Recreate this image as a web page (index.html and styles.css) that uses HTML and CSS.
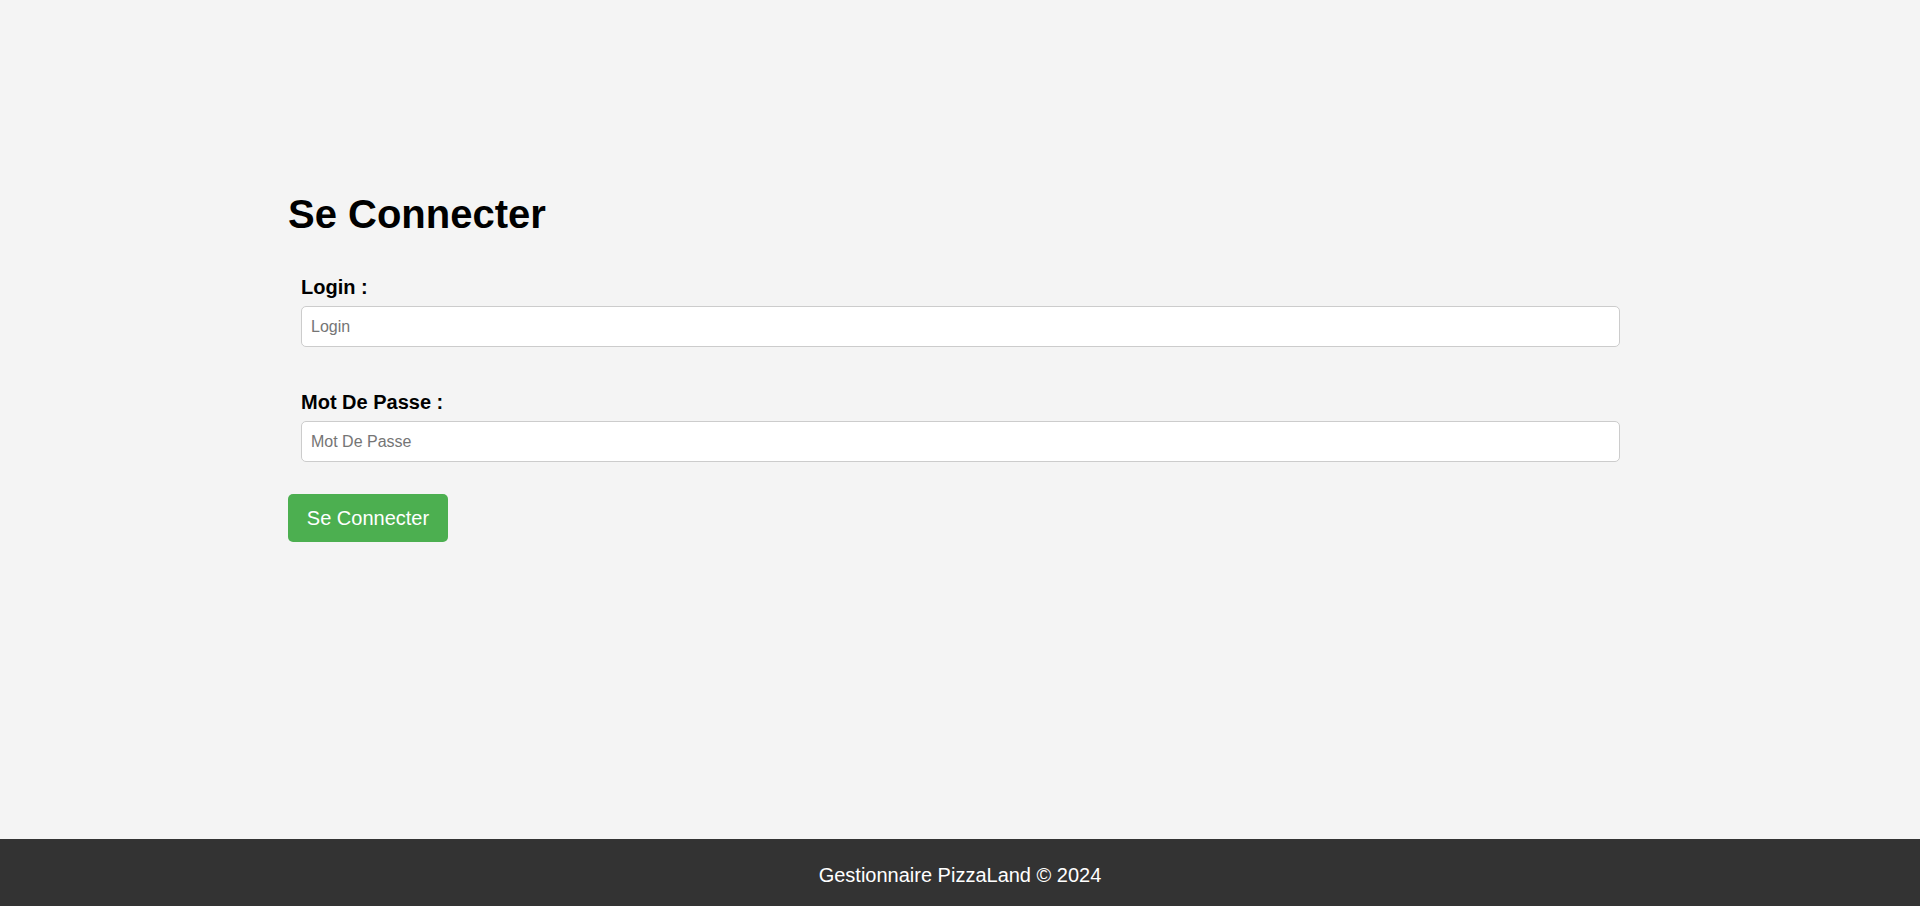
FILE: index.html
```html
<!DOCTYPE html>
<html lang="fr">
<head>
<meta charset="utf-8">
<title>Se Connecter</title>
<link rel="stylesheet" href="styles.css">
</head>
<body>
<main class="main">
  <div class="container">
    <h1 class="title">Se Connecter</h1>
    <form class="form">
      <div class="form-group">
        <label class="label" for="login">Login :</label>
        <input class="input" id="login" type="text" placeholder="Login">
      </div>
      <div class="form-group">
        <label class="label" for="mdp">Mot De Passe :</label>
        <input class="input" id="mdp" type="password" placeholder="Mot De Passe">
      </div>
      <button class="btn" type="button">Se Connecter</button>
    </form>
  </div>
</main>
<footer class="footer">Gestionnaire PizzaLand © 2024</footer>
</body>
</html>
```

FILE: styles.css
```css
html, body {
  margin: 0;
  padding: 0;
}
body {
  min-height: 100vh;
  display: flex;
  flex-direction: column;
  background: #f4f4f4;
  font-family: "Liberation Sans", Arial, sans-serif;
  color: #000;
}
.main {
  flex: 1;
  padding-top: 191px;
}
.container {
  width: 70%;
  margin: 0 auto;
}
.title {
  margin: 0 0 39px;
  font-size: 40px;
  font-weight: bold;
  line-height: 46px;
}
.form {
  display: flex;
  flex-direction: column;
  align-items: flex-start;
}
.form-group {
  align-self: stretch;
  display: flex;
  flex-direction: column;
  margin: 0 12.5px 44px 13px;
}
.form-group:nth-of-type(2) {
  margin-bottom: 32px;
}
.label {
  font-size: 20px;
  font-weight: bold;
  line-height: 23px;
  margin-bottom: 7px;
}
.input {
  box-sizing: border-box;
  width: 100%;
  height: 41px;
  padding: 10px 9px;
  border: 1px solid #ccc;
  border-radius: 5px;
  background: #fff;
  font-family: "Liberation Sans", Arial, sans-serif;
  font-size: 16px;
  color: #000;
  outline: none;
}
.input::placeholder {
  color: #757575;
}
.btn {
  box-sizing: border-box;
  height: 48px;
  width: 160px;
  padding: 0;
  border: none;
  border-radius: 5px;
  background: #4caf50;
  color: #fff;
  font-family: "Liberation Sans", Arial, sans-serif;
  font-size: 20px;
  line-height: 48px;
  cursor: pointer;
}
.footer {
  background: #333;
  color: #fff;
  text-align: center;
  font-size: 20px;
  line-height: 23px;
  padding: 25px 0 19px;
}
```
